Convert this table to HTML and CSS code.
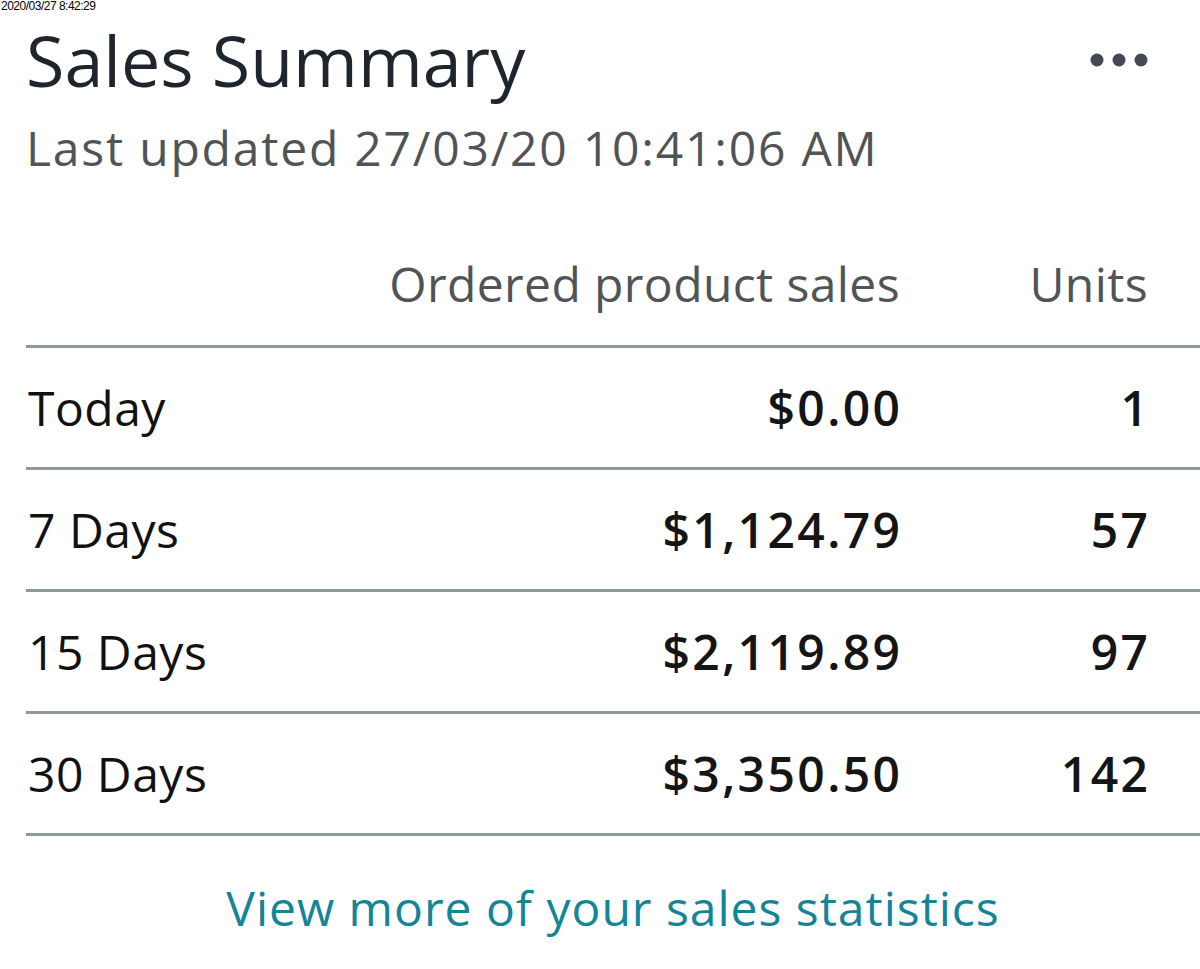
FILE: index.html
```html
<!DOCTYPE html>
<html lang="en">
<head>
<meta charset="utf-8">
<title>Sales Summary</title>
<link rel="stylesheet" href="styles.css">
</head>
<body>
<div class="stamp">2020/03/27 8:42:29</div>
<section class="card">
  <header class="head">
    <div class="head-text">
      <h1 class="title">Sales Summary</h1>
      <p class="updated">Last updated 27/03/20 10:41:06 AM</p>
    </div>
    <button class="more" aria-label="More options">
      <svg width="62" height="16" viewBox="0 0 62 16" aria-hidden="true">
        <circle cx="8" cy="8" r="6.5" fill="#434a54"/>
        <circle cx="30" cy="8" r="6.5" fill="#434a54"/>
        <circle cx="52" cy="8" r="6.5" fill="#434a54"/>
      </svg>
    </button>
  </header>

  <div class="grid">
    <div class="row row-head">
      <span class="cell label"></span>
      <span class="cell sales">Ordered product sales</span>
      <span class="cell units">Units</span>
    </div>
    <div class="row">
      <span class="cell label">Today</span>
      <span class="cell sales"><span class="value">$0.00</span></span>
      <span class="cell units"><span class="value">1</span></span>
    </div>
    <div class="row">
      <span class="cell label">7 Days</span>
      <span class="cell sales"><span class="value">$1,124.79</span></span>
      <span class="cell units"><span class="value">57</span></span>
    </div>
    <div class="row">
      <span class="cell label">15 Days</span>
      <span class="cell sales"><span class="value">$2,119.89</span></span>
      <span class="cell units"><span class="value">97</span></span>
    </div>
    <div class="row row-last">
      <span class="cell label">30 Days</span>
      <span class="cell sales"><span class="value">$3,350.50</span></span>
      <span class="cell units"><span class="value">142</span></span>
    </div>
  </div>

  <footer class="foot">
    <a class="link" href="#">View more of your sales statistics</a>
  </footer>
</section>
</body>
</html>
```

FILE: styles.css
```css
* {
  box-sizing: border-box;
}

html, body {
  margin: 0;
  padding: 0;
  background: #ffffff;
}

body {
  font-family: "Open Sans", "Noto Sans", "Liberation Sans", sans-serif;
  color: #111111;
  position: relative;
  width: 1200px;
  height: 969px;
  overflow: hidden;
}

.stamp {
  position: absolute;
  left: 1px;
  top: 0;
  font-family: "Liberation Sans", "DejaVu Sans", sans-serif;
  font-size: 12px;
  line-height: 13px;
  letter-spacing: -0.5px;
  color: #000000;
}

.card {
  padding: 18px 0 0 26px;
}

.head {
  display: flex;
  justify-content: space-between;
  align-items: flex-start;
}

.title {
  margin: 0;
  font-size: 70px;
  line-height: 84px;
  font-weight: 400;
  color: #1f252d;
}

.updated {
  margin: 18px 0 0 0;
  font-size: 48px;
  line-height: 56px;
  font-weight: 400;
  letter-spacing: 1.8px;
  color: #4f5456;
}

.more {
  margin: 34px 49px 0 0;
  padding: 0;
  border: 0;
  background: none;
  display: flex;
}

.grid {
  margin-top: 80px;
  display: flex;
  flex-direction: column;
}

.row {
  display: grid;
  grid-template-columns: 1fr auto 248px;
  align-items: center;
  padding-right: 52px;
  height: 122px;
  border-top: 3px solid #8e9a9a;
  font-size: 48px;
  line-height: 56px;
}

.row-head {
  height: auto;
  border-top: 0;
  padding-bottom: 33px;
  color: #4f5456;
  letter-spacing: 0.4px;
}

.row-last {
  border-bottom: 3px solid #8e9a9a;
  height: 125px;
}

.cell.label {
  padding-left: 2px;
  color: #111111;
  letter-spacing: 0.5px;
}

.cell.sales,
.cell.units {
  text-align: right;
}

.value {
  font-weight: 600;
  letter-spacing: 2.4px;
  margin-right: -2.4px;
  color: #151515;
}

.foot {
  margin-top: 44px;
  text-align: center;
}

.link {
  font-size: 48px;
  line-height: 56px;
  letter-spacing: 1px;
  color: #148597;
  text-decoration: none;
}
```
